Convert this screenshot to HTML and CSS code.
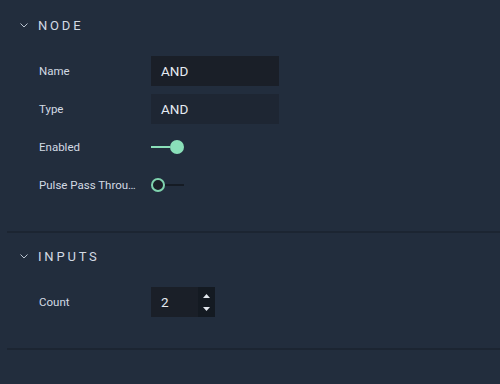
FILE: index.html
```html
<!DOCTYPE html>
<html>
<head>
<meta charset="utf-8">
<link rel="stylesheet" href="styles.css">
</head>
<body>
<div class="panel">
  <section class="section first">
    <div class="header">
      <svg class="chev" width="8" height="5" viewBox="0 0 8 5"><path d="M0.5 0.5 L4 4 L7.5 0.5" fill="none" stroke="#b9c3d0" stroke-width="1"/></svg>
      <span class="title">NODE</span>
    </div>
    <div class="rows">
      <div class="row"><span class="label">Name</span><div class="input">AND</div></div>
      <div class="row"><span class="label">Type</span><div class="input readonly">AND</div></div>
      <div class="row"><span class="label">Enabled</span><div class="toggle on"><span class="track"></span><span class="knob"></span></div></div>
      <div class="row"><span class="label">Pulse Pass Throu…</span><div class="toggle off"><span class="knob"></span><span class="track"></span></div></div>
    </div>
  </section>
  <section class="section">
    <div class="header">
      <svg class="chev" width="8" height="5" viewBox="0 0 8 5"><path d="M0.5 0.5 L4 4 L7.5 0.5" fill="none" stroke="#b9c3d0" stroke-width="1"/></svg>
      <span class="title">INPUTS</span>
    </div>
    <div class="rows">
      <div class="row"><span class="label">Count</span>
        <div class="number">
          <span class="num-val">2</span>
          <div class="spinner">
            <svg width="7" height="4" viewBox="0 0 7 4"><path d="M0 4 L3.5 0 L7 4Z" fill="#e3e8ef"/></svg>
            <svg width="7" height="4" viewBox="0 0 7 4"><path d="M0 0 L3.5 4 L7 0Z" fill="#e3e8ef"/></svg>
          </div>
        </div>
      </div>
    </div>
  </section>
</div>
</body>
</html>
```

FILE: styles.css
```css
html, body {
  margin: 0;
  padding: 0;
  background: #222d3d;
  font-family: Roboto, "Liberation Sans", sans-serif;
  width: 500px;
  height: 384px;
  overflow: hidden;
}
.panel {
  padding-left: 7px;
}
.section {
  border-bottom: 2px solid #1c2532;
  padding-bottom: 27px;
}
.section.first {
  margin-top: 2px;
}
.header {
  height: 46px;
  display: flex;
  align-items: center;
  padding-left: 13px;
}
.chev {
  display: block;
  margin-right: 10px;
  margin-top: 1px;
}
.title {
  color: #d3dae4;
  font-size: 13px;
  letter-spacing: 2.8px;
  font-weight: 400;
}
.rows {
  padding-top: 4px;
}
.row {
  height: 38px;
  display: flex;
  align-items: center;
  padding-left: 32px;
}
.label {
  width: 112px;
  color: #d3dae4;
  font-size: 11.5px;
  white-space: nowrap;
}
.input {
  width: 118px;
  height: 30px;
  background: #1a1f28;
  color: #e6ebf2;
  font-size: 13.5px;
  line-height: 30px;
  padding-left: 10px;
}
.input.readonly {
  background: #1e2633;
}
.toggle {
  display: flex;
  align-items: center;
  width: 33px;
  height: 14px;
}
.toggle .track {
  height: 2px;
  flex: 1;
}
.toggle.on .track {
  background: #8adfb9;
}
.toggle.on .knob {
  width: 14px;
  height: 14px;
  border-radius: 50%;
  background: #8adfb9;
}
.toggle.off .knob {
  width: 10px;
  height: 10px;
  border-radius: 50%;
  border: 2px solid #7fd3ae;
  background: #1a1f27;
}
.toggle.off .track {
  background: #151b24;
}
.number {
  display: flex;
  width: 64px;
  height: 30px;
  background: #1a1f28;
}
.num-val {
  flex: 1;
  color: #e6ebf2;
  font-size: 13.5px;
  line-height: 30px;
  padding-left: 10px;
}
.spinner {
  width: 17px;
  background: #141a22;
  display: flex;
  flex-direction: column;
  align-items: center;
  justify-content: center;
  gap: 9px;
}
.spinner svg {
  display: block;
}
```
